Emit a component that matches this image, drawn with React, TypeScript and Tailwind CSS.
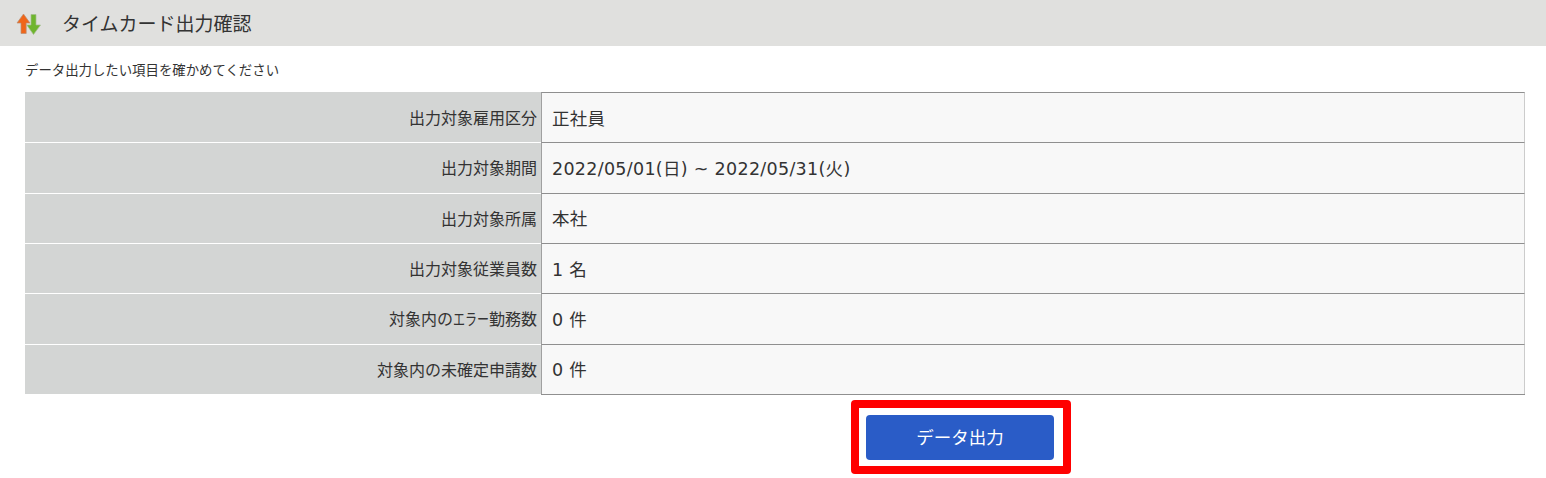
import React from 'react';

const rows: { label: React.ReactNode; value: string }[] = [
  { label: '出力対象雇用区分', value: '正社員' },
  { label: '出力対象期間', value: '2022/05/01(日) ~ 2022/05/31(火)' },
  { label: '出力対象所属', value: '本社' },
  { label: '出力対象従業員数', value: '1 名' },
  { label: <>対象内の<span className="inline-block w-[36px] origin-left scale-x-75 whitespace-nowrap">エラー</span>勤務数</>, value: '0 件' },
  { label: '対象内の未確定申請数', value: '0 件' },
];

const App: React.FC = () => {
  return (
    <div className="h-[478px] overflow-hidden bg-white font-['Noto_Sans_CJK_JP',sans-serif] text-[#333]">
      <div className="flex h-[46px] items-center bg-[#e0e0de] pl-[16px]">
        <svg width="26" height="26" viewBox="0 0 26 26" className="shrink-0">
          <path d="M7.5 4 L14 13 H10.2 V23.5 H5 V13 H1 Z" fill="#f0661a" stroke="#b98f74" strokeWidth="0.7" strokeLinejoin="round" />
          <path d="M15 4.5 H20 V15 H24.5 L17.5 24.5 L10.8 15 H15 Z" fill="#6fb52e" stroke="#a3bd8e" strokeWidth="0.7" strokeLinejoin="round" />
        </svg>
        <h1 className="ml-[20px] text-[19px] font-normal">タイムカード出力確認</h1>
      </div>

      <p className="ml-[25px] mt-[14px] h-[32px] text-[13.4px] leading-[19px]">
        データ出力したい項目を確かめてください
      </p>

      <div className="ml-[25px] flex w-[1500px] flex-col">
        {rows.map((row, i) => (
          <div key={i} className="flex h-[50.34px]">
            <div className={`flex w-[516px] items-center justify-end bg-[#d3d5d4] pr-[4px] text-[16px] ${i > 0 ? 'border-t border-white pb-px' : ''}`}>
              <span>{row.label}</span>
            </div>
            <div className="flex flex-1 items-center border-l border-r border-t border-l-[#a0a0a0] border-r-[#cccccc] border-t-[#8f8f8f] bg-[#f8f8f8] pl-[10px] font-['DejaVu_Sans','Noto_Sans_CJK_JP',sans-serif] text-[17.5px] tracking-[0.3px]">
              <span className="translate-y-px">{row.value}</span>
            </div>
          </div>
        ))}
        <div className="ml-[516px] h-px bg-[#8f8f8f]" />
      </div>

      <div className="ml-[851px] mt-[5px] h-[74px] w-[220px] rounded-[4px] border-[8px] border-[#ff0000] bg-white pl-[7px] pt-[7px]">
        <button className="block h-[45px] w-[188px] rounded-[4px] bg-[#2a5cc7] text-[17.5px] text-white">
          データ出力
        </button>
      </div>
    </div>
  );
};

export default App;
